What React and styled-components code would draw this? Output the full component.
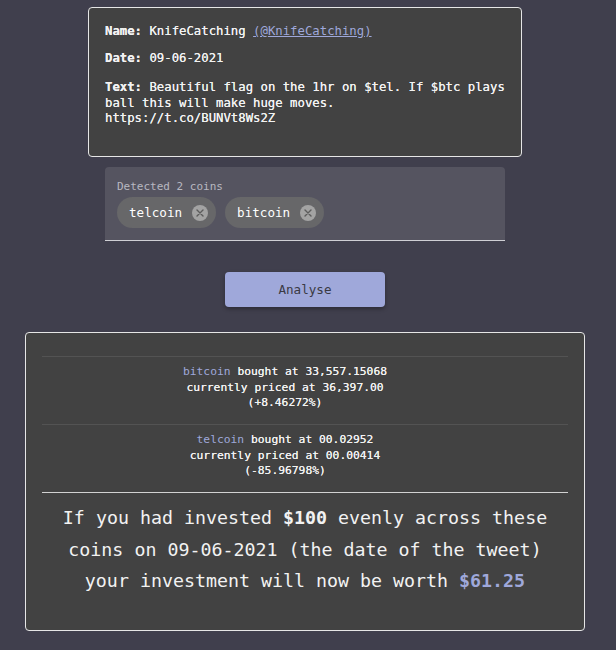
import React from 'react';
import styled, { createGlobalStyle } from 'styled-components';

const GlobalStyle = createGlobalStyle`
  html, body {
    margin: 0;
    padding: 0;
    background-color: #403f4d;
  }
  body {
    font-family: 'DejaVu Sans Mono', 'Liberation Mono', monospace;
    color: #f2f2f2;
  }
`;

const tweet = {
  name: 'KnifeCatching',
  handle: 'KnifeCatching',
  date: '09-06-2021',
  text: 'Beautiful flag on the 1hr on $tel. If $btc plays ball this will make huge moves. https://t.co/BUNVt8Ws2Z',
};

const coins = ['telcoin', 'bitcoin'];

const results = [
  { coin: 'bitcoin', bought: '33,557.15068', now: '36,397.00', change: '+8.46272%' },
  { coin: 'telcoin', bought: '00.02952', now: '00.00414', change: '-85.96798%' },
];

export default function App() {
  return (
    <>
      <GlobalStyle />
      <Page>
        <TweetCard>
          <Line gap={11.5}>
            <Label>Name:</Label> {tweet.name}{' '}
            <Handle href="#">(@{tweet.handle})</Handle>
          </Line>
          <Line gap={13.5}>
            <Label>Date:</Label> {tweet.date}
          </Line>
          <Line gap={0}>
            <Label>Text:</Label> {tweet.text}
          </Line>
        </TweetCard>

        <Detected>
          <DetectedLabel>Detected {coins.length} coins</DetectedLabel>
          <Chips>
            {coins.map((c) => (
              <Chip key={c}>
                {c}
                <ChipClose>
                  <svg width="10" height="10" viewBox="0 0 10 10">
                    <path d="M2 2 L8 8 M8 2 L2 8" stroke="#5c5c5c" strokeWidth="1.4" strokeLinecap="round" />
                  </svg>
                </ChipClose>
              </Chip>
            ))}
          </Chips>
        </Detected>

        <AnalyseButton>Analyse</AnalyseButton>

        <ResultCard>
          {results.map((r) => (
            <Entry key={r.coin}>
              <div>
                <Coin>{r.coin}</Coin> bought at {r.bought}
              </div>
              <div>currently priced at {r.now}</div>
              <div>({r.change})</div>
            </Entry>
          ))}
          <Summary>
            If you had invested <strong>$100</strong> evenly across these coins on{' '}
            {tweet.date} (the date of the tweet) your investment will now be worth{' '}
            <Worth>$61.25</Worth>
          </Summary>
        </ResultCard>
      </Page>
    </>
  );
}

const Page = styled.div`
  width: 610px;
  display: flex;
  flex-direction: column;
  align-items: center;
  padding: 7px 0 19px;
`;

const TweetCard = styled.div`
  width: 400px;
  padding: 16px 16px 29.5px;
  background-color: #424242;
  border: 1px solid #e6e6e6;
  border-radius: 4px;
  font-size: 12.3px;
  line-height: 15.5px;
  text-shadow: 0 0 0.4px #f2f2f2;
`;

const Line = styled.p`
  margin: 0 0 ${(p) => p.gap}px;
`;

const Label = styled.b`
  font-weight: bold;
`;

const Handle = styled.a`
  color: #9fa8da;
  text-decoration: underline;
  text-shadow: none;
`;

const Detected = styled.div`
  width: 376px;
  margin-top: 10px;
  padding: 12px 12px 12px;
  background-color: #555460;
  border-radius: 4px 4px 0 0;
  border-bottom: 1px solid #cfcfd4;
`;

const DetectedLabel = styled.div`
  font-size: 11px;
  line-height: 15px;
  color: #b8b8c0;
  margin-bottom: 3px;
`;

const Chips = styled.div`
  display: flex;
  gap: 9px;
`;

const Chip = styled.div`
  display: flex;
  align-items: center;
  gap: 10px;
  height: 31px;
  padding: 0 8px 0 12px;
  border-radius: 16px;
  background-color: #676769;
  font-size: 12.6px;
  color: #ffffff;
`;

const ChipClose = styled.span`
  width: 16px;
  height: 16px;
  border-radius: 50%;
  background-color: #a3a3a3;
  display: flex;
  align-items: center;
  justify-content: center;
`;

const AnalyseButton = styled.button`
  margin-top: 31px;
  width: 160px;
  height: 35px;
  border: none;
  border-radius: 4px;
  background-color: #9fa8da;
  color: #3a3a44;
  font-family: inherit;
  font-size: 12.6px;
  box-shadow: 0 2px 4px rgba(0, 0, 0, 0.3);
`;

const ResultCard = styled.div`
  width: 526px;
  margin-top: 25px;
  padding: 23px 16px 33px;
  background-color: #424242;
  border: 1px solid #e6e6e6;
  border-radius: 4px;
  text-align: center;
`;

const Entry = styled.div`
  border-top: 1px solid #535353;
  padding: 7px 40px 13.5px 0;
  font-size: 11.3px;
  line-height: 15.5px;
  text-shadow: 0 0 0.4px #f2f2f2;
`;

const Coin = styled.span`
  color: #9fa8da;
  text-shadow: none;
`;

const Summary = styled.div`
  border-top: 1px solid #d2d2d2;
  padding: 9px 8px 0;
  font-size: 18.3px;
  line-height: 31.5px;
  strong {
    font-weight: bold;
  }
`;

const Worth = styled.strong`
  color: #9fa8da;
`;
